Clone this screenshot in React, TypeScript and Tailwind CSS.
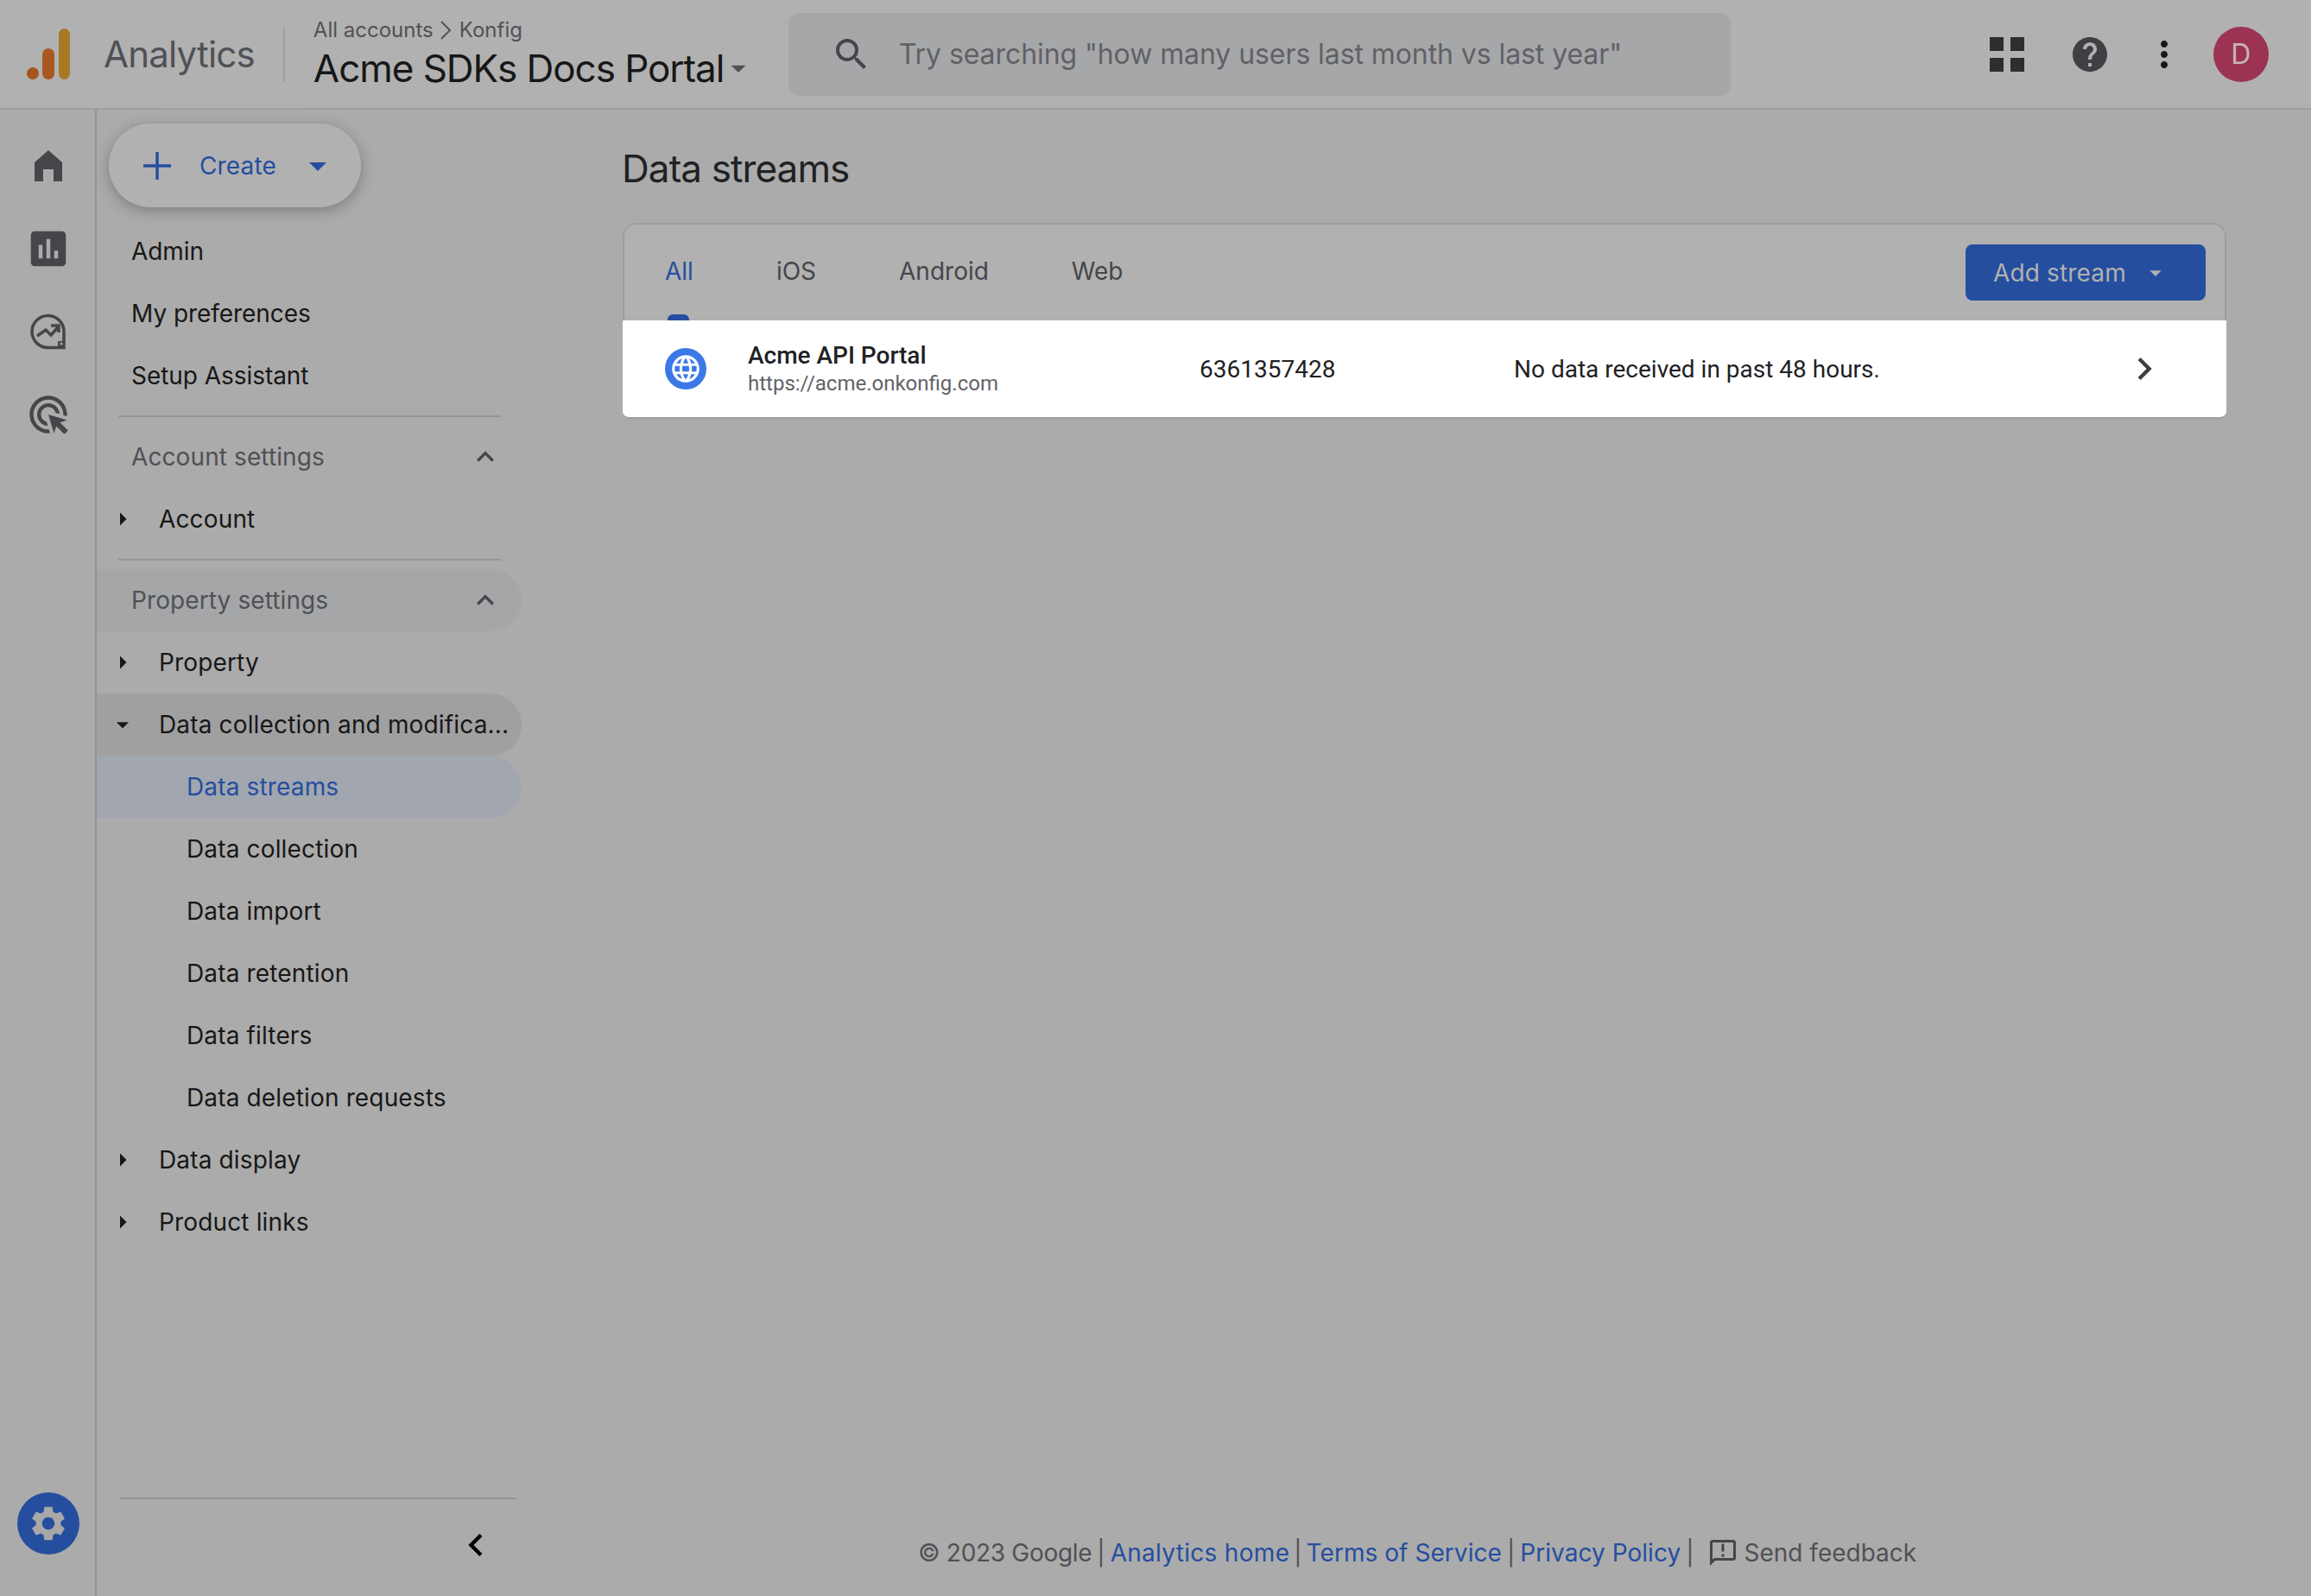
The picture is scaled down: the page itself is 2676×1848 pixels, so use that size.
import {
  MdArrowDropDown,
  MdArrowRight,
  MdAssessment,
  MdChevronLeft,
  MdChevronRight,
  MdExpandLess,
  MdHelp,
  MdLanguage,
  MdMoreVert,
  MdOutlineAdsClick,
  MdOutlineAnnouncement,
  MdSearch,
  MdSettings,
} from "react-icons/md";

const sans = "font-['Inter','Noto_Sans',sans-serif]";

function Logo() {
  return (
    <svg width="50" height="60" viewBox="0 0 50 60" className="shrink-0">
      <rect x="37" y="0" width="13" height="59" rx="6.5" fill="#a97a25" />
      <rect x="18" y="23" width="14" height="36" rx="7" fill="#a9591f" />
      <circle cx="7" cy="52" r="7" fill="#a5561c" />
    </svg>
  );
}

function HomeIcon() {
  return (
    <svg width="48" height="48" viewBox="0 0 48 48" fill="#45464a">
      <path d="M24 6 L40 20 V42 H30 V28 H18 V42 H8 V20 Z" />
    </svg>
  );
}

function ExploreIcon() {
  return (
    <svg width="48" height="48" viewBox="0 0 48 48" fill="none" stroke="#45464a" strokeWidth="3.5">
      <path d="M42 24 A18.5 18.5 0 1 0 24 42.5 H42 Z" />
      <path d="M11 29 L21 22 L27 28 L36 18" />
      <path d="M27 17 H36 V25" />
      <rect x="35" y="35" width="7" height="8" fill="#45464a" stroke="none" />
      <circle cx="39" cy="38" r="1.5" fill="#ababab" stroke="none" />
    </svg>
  );
}

function AppsIcon() {
  return (
    <div className="grid grid-cols-2 gap-2">
      <div className="h-4 w-4 bg-[#2e2e2e]" />
      <div className="h-4 w-4 bg-[#2e2e2e]" />
      <div className="h-4 w-4 bg-[#2e2e2e]" />
      <div className="h-4 w-4 bg-[#2e2e2e]" />
    </div>
  );
}

function RailItem({ children }: { children: React.ReactNode }) {
  return <div className="flex h-24 items-center justify-center">{children}</div>;
}

function NavRow({
  label,
  level = 1,
  arrow,
  tone = "",
}: {
  label: string;
  level?: 0 | 1 | 2;
  arrow?: "right" | "down";
  tone?: string;
}) {
  return (
    <div className={`relative flex h-[72px] items-center rounded-r-[36px] text-[28px] text-[#171717] ${tone}`}>
      {arrow === "right" && <MdArrowRight className="absolute left-[12px] text-[#171717]" size={36} />}
      {arrow === "down" && <MdArrowDropDown className="absolute left-[13px] text-[#171717]" size={34} />}
      <span
        className={`whitespace-nowrap ${
          level === 0
            ? "pl-10 tracking-[-0.05px]"
            : level === 1
              ? "pl-[72px] tracking-[0.15px]"
              : "pl-[104px] tracking-[0.15px]"
        }`}
      >
        {label}
      </span>
    </div>
  );
}

function SectionRow({ label, tone = "" }: { label: string; tone?: string }) {
  return (
    <div className={`flex h-[72px] items-center justify-between rounded-r-[36px] pl-10 pr-[22px] text-[28px] tracking-[0.1px] text-[#4f5154] ${tone}`}>
      <span>{label}</span>
      <MdExpandLess className="text-[#45464a]" size={40} />
    </div>
  );
}

function Sidebar() {
  return (
    <aside className="flex w-[492px] shrink-0 flex-col">
      <div className="pl-[14px] pt-[16px]">
        <div className="flex h-[97px] w-[292px] items-center rounded-[48px] bg-[#b1b1b1] pl-[40px] shadow-[0_4px_16px_rgba(40,40,50,0.35)]">
          <svg width="32" height="32" viewBox="0 0 32 32" stroke="#254e9f" strokeWidth="3.5">
            <path d="M16 0 V32 M0 16 H32" />
          </svg>
          <span className="ml-[33px] text-[28px] tracking-[0.15px] text-[#254e9f]">Create</span>
          <MdArrowDropDown className="ml-[24px] text-[#254e9f]" size={48} />
        </div>
      </div>
      <div className="mt-[15px]">
        <NavRow label="Admin" level={0} />
        <NavRow label="My preferences" level={0} />
        <NavRow label="Setup Assistant" level={0} />
      </div>
      <div className="my-[10px] ml-[25px] mr-[24px] h-[2px] bg-[#949494]" />
      <SectionRow label="Account settings" />
      <NavRow label="Account" arrow="right" />
      <div className="my-[10px] ml-[25px] mr-[24px] h-[2px] bg-[#949494]" />
      <SectionRow label="Property settings" tone="bg-[#a5a6a8]" />
      <NavRow label="Property" arrow="right" />
      <NavRow label="Data collection and modifica..." arrow="down" tone="bg-[#a0a0a1]" />
      <div className="flex h-[72px] items-center rounded-r-[36px] bg-[#a1a6af] pl-[104px] text-[28px] tracking-[0.15px] text-[#254e9f]">
        Data streams
      </div>
      <NavRow label="Data collection" level={2} />
      <NavRow label="Data import" level={2} />
      <NavRow label="Data retention" level={2} />
      <NavRow label="Data filters" level={2} />
      <NavRow label="Data deletion requests" level={2} />
      <NavRow label="Data display" arrow="right" />
      <NavRow label="Product links" arrow="right" />
      <div className="mt-auto">
        <div className="ml-[26px] mr-[6px] h-[2px] bg-[#949494]" />
        <div className="flex h-[112px] items-start justify-end pr-[27px] pt-[27px]">
          <MdChevronLeft className="text-black" size={52} />
        </div>
      </div>
    </aside>
  );
}

function Tab({ label, active }: { label: string; active?: boolean }) {
  return (
    <div className={`relative text-[28px] ${active ? "text-[#254e9f]" : "text-[#45464a]"}`}>
      {label}
      {active && <div className="absolute left-[3px] top-[71px] h-[7px] w-[25px] rounded-t-[6px] bg-[#254e9f]" />}
    </div>
  );
}

export default function App() {
  return (
    <div className={`flex h-[1848px] w-[2676px] flex-col overflow-hidden bg-[#ababab] ${sans}`}>
      <header className="flex h-[127px] shrink-0 items-center border-b-2 border-[#9e9ea2] bg-[#b1b1b1]">
        <div className="ml-[31px]">
          <Logo />
        </div>
        <span className="ml-[39px] text-[42px] tracking-[-0.8px] text-[#505155]">Analytics</span>
        <div className="ml-[33px] h-16 w-[2px] bg-[#a0a0a0]" />
        <div className="ml-[33px] flex w-[550px] flex-col">
          <div className="-mt-[4px] flex items-center text-[24px] text-[#505155]">
            All accounts
            <svg width="22" height="24" viewBox="0 0 22 24" fill="none" stroke="#505155" strokeWidth="2" className="ml-[3px] mr-[5px]">
              <path d="M6 2 L16 12 L6 22" />
            </svg>
            Konfig
          </div>
          <div className="flex items-center text-[44px] leading-[52px] tracking-[-1.05px] text-[#171717]">
            Acme SDKs Docs Portal
            <MdArrowDropDown size={40} className="-ml-[3px] text-[#505155]" />
          </div>
        </div>
        <div className="flex h-[96px] w-[1091px] items-center rounded-xl bg-[#a6a7a9] pl-[49px]">
          <MdSearch size={48} className="text-[#45464a]" />
          <span className="ml-[31px] text-[32px] tracking-[-0.08px] text-[#606164]">
            Try searching "how many users last month vs last year"
          </span>
        </div>
        <div className="ml-[300px] flex items-center">
          <AppsIcon />
          <MdHelp size={48} className="ml-[52px] text-[#3f4043]" />
          <MdMoreVert size={48} className="ml-[38px] text-[#171717]" />
          <div className="ml-[33px] flex h-16 w-16 items-center justify-center rounded-full bg-[#9c3353] text-[32px] text-[#c9b3ba]">
            D
          </div>
        </div>
      </header>

      <div className="flex min-h-0 flex-1">
        <nav className="flex w-[112px] shrink-0 flex-col border-r-2 border-[#949494] pl-[2px] pt-[17px]">
          <RailItem>
            <HomeIcon />
          </RailItem>
          <RailItem>
            <MdAssessment size={54} className="text-[#45464a]" />
          </RailItem>
          <RailItem>
            <ExploreIcon />
          </RailItem>
          <RailItem>
            <MdOutlineAdsClick size={52} className="text-[#45464a]" />
          </RailItem>
          <div className="mb-[48px] mt-auto flex justify-center">
            <div className="flex h-[72px] w-[72px] items-center justify-center rounded-full bg-[#254e9f]">
              <MdSettings size={48} className="text-[#a8a8a8]" />
            </div>
          </div>
        </nav>

        <Sidebar />

        <main className="flex min-w-0 flex-1 flex-col pl-[116px] pr-[98px]">
          <h1 className="mt-[40px] text-[44px] leading-[56px] tracking-[-0.9px] text-[#202124]">Data streams</h1>
          <section className="ml-px mt-[35px] overflow-hidden rounded-t-2xl rounded-b-lg border-b-2 border-[#9d9da1] bg-[#b1b1b1]">
            <div className="flex h-[113px] items-center justify-between rounded-t-2xl border-x-2 border-t-2 border-[#9d9da1] pl-[47px] pr-[22px]">
              <div className="flex gap-[96px] pb-[4px]">
                <Tab label="All" active />
                <Tab label="iOS" />
                <Tab label="Android" />
                <Tab label="Web" />
              </div>
              <div className="flex h-[65px] w-[278px] items-center rounded-lg bg-[#254e9f] pl-8 text-[28px] tracking-[0.15px] text-[#b1b1b1]">
                Add stream
                <MdArrowDropDown size={32} className="ml-[18px]" />
              </div>
            </div>
            <div className="flex h-[112px] items-center bg-white font-['Roboto',sans-serif] text-[28px] text-[#202124]">
              <div className="ml-[49px] flex h-12 w-12 items-center justify-center rounded-full bg-[#3b78e7]">
                <MdLanguage size={38} className="text-white" />
              </div>
              <div className="ml-[48px] w-[523px]">
                <div className="text-[28px] leading-[34px] font-medium">Acme API Portal</div>
                <div className="text-[24px] leading-[30px] text-[#5f6368]">https://acme.onkonfig.com</div>
              </div>
              <span className="w-[364px] pt-[2px]">6361357428</span>
              <span className="pt-[2px]">No data received in past 48 hours.</span>
              <MdChevronRight size={52} className="ml-auto mr-[69px] text-[#3c4043]" />
            </div>
          </section>
          <footer className="mt-auto mb-[29px] ml-[343px] flex items-center text-[28px] text-[#505155]">
            <span className="tracking-[-0.3px]">© 2023 Google</span>
            <span className="mx-[6px]">|</span>
            <span className="tracking-[0.3px] text-[#254e9f]">Analytics home</span>
            <span className="mx-[5px]">|</span>
            <span className="tracking-[0.05px] text-[#254e9f]">Terms of Service</span>
            <span className="mx-[6px]">|</span>
            <span className="tracking-[0.05px] text-[#254e9f]">Privacy Policy</span>
            <span className="mx-[6px]">|</span>
            <MdOutlineAnnouncement size={36} className="ml-[9px] mr-[7px] text-[#45464a]" />
            Send feedback
          </footer>
        </main>
      </div>
    </div>
  );
}
